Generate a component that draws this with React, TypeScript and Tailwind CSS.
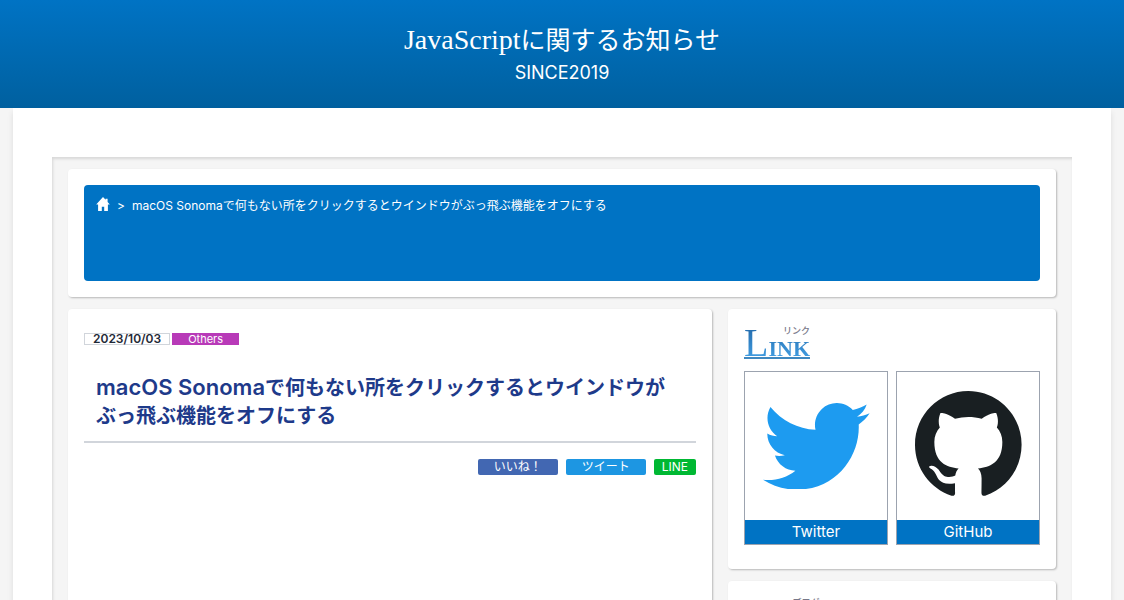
import type { ReactNode } from "react";

const PRODUCT = "macOS Sonoma";
const TOPIC = "で何もない所をクリックするとウインドウがぶっ飛ぶ機能をオフにする";

function Card({ children, className = "" }: { children: ReactNode; className?: string }) {
  return (
    <div className={`rounded-sm bg-white p-4 shadow-[1px_1px_2px_rgba(0,0,0,0.25)] ${className}`}>{children}</div>
  );
}

function HomeIcon() {
  return (
    <svg viewBox="0 0 14 14" className="h-[14px] w-[14px]" fill="currentColor" aria-hidden="true">
      <path d="M7 0 0.2 7.4h1.900V14h3.700V9.800h2.400V14h3.700V7.400h1.900L11.600 5V1.800H9.600v1z" />
    </svg>
  );
}

function TwitterLogo() {
  return (
    <svg viewBox="1 1.5 247 200" className="w-[107px]" fill="#1d9bf0" aria-hidden="true">
      <path d="M221.950 51.290c.15 2.170.15 4.340.15 6.530 0 66.730-50.800 143.690-143.690 143.690v-.04c-27.440.04-54.310-7.820-77.410-22.640 3.990.48 8 .72 12.020.73 22.740.02 44.830-7.610 62.720-21.660-21.610-.41-40.560-14.500-47.180-35.070 7.570 1.460 15.370 1.160 22.800-.87-23.560-4.760-40.510-25.460-40.510-49.500v-.64c7.020 3.910 14.880 6.080 22.920 6.320C11.580 63.310 4.740 33.790 18.140 10.710c25.640 31.550 63.470 50.730 104.080 52.760-4.070-17.540 1.490-35.920 14.610-48.250 20.340-19.120 52.330-18.140 71.450 2.190 11.310-2.230 22.150-6.380 32.070-12.260-3.770 11.690-11.660 21.620-22.200 27.930 10.010-1.180 19.790-3.860 29-7.950-6.780 10.160-15.320 19.010-25.200 26.160z" />
    </svg>
  );
}

function GitHubLogo() {
  return (
    <svg viewBox="0 0 98 98" className="mb-1 w-[107px]" fill="#191f22" aria-hidden="true">
      <path
        fillRule="evenodd"
        d="M48.854 0C21.839 0 0 22 0 49.217c0 21.756 13.993 40.172 33.405 46.690 2.427.49 3.316-1.059 3.316-2.362 0-1.141-.08-5.052-.08-9.127-13.590 2.934-16.420-5.867-16.420-5.867-2.184-5.704-5.420-7.170-5.420-7.170-4.448-3.015.324-3.015.324-3.015 4.934.326 7.523 5.052 7.523 5.052 4.367 7.496 11.404 5.378 14.235 4.074.404-3.178 1.699-5.378 3.074-6.600-10.839-1.141-22.243-5.378-22.243-24.283 0-5.378 1.940-9.778 5.014-13.200-.485-1.222-2.184-6.275.486-13.038 0 0 4.125-1.304 13.426 5.052a46.970 46.970 0 0 1 12.214-1.630c4.125 0 8.330.571 12.213 1.630 9.302-6.356 13.427-5.052 13.427-5.052 2.670 6.763.97 11.816.485 13.038 3.155 3.422 5.015 7.822 5.015 13.200 0 18.905-11.404 23.060-22.324 24.283 1.780 1.548 3.316 4.481 3.316 9.126 0 6.600-.08 11.897-.08 13.526 0 1.304.89 2.853 3.316 2.364 19.412-6.520 33.405-24.935 33.405-46.691C97.707 22 75.788 0 48.854 0z"
      />
    </svg>
  );
}

function LinkTile({ label, href, children }: { label: string; href: string; children: ReactNode }) {
  return (
    <a href={href} className="flex flex-col border border-[#9ca3af]">
      <span className="flex h-[148px] items-center justify-center">{children}</span>
      <span className="bg-[#0073c4] text-center text-[15px] leading-6 text-white">{label}</span>
    </a>
  );
}

function SectionHeading({ title, ruby }: { title: string; ruby: string }) {
  return (
    <h2 className="relative flex h-[34px] w-fit items-baseline border-b-2 border-[#3f88c0] bg-linear-to-b from-[#2368a8] to-[#3f9be0] bg-clip-text font-['Liberation_Serif',serif] text-transparent">
      <span className="text-[40px] leading-9">{title[0]}</span>
      <span className="text-[22px] leading-5 font-bold">{title.slice(1)}</span>
      <span className="absolute top-0 right-0 font-['Noto_Sans_CJK_JP',sans-serif] text-[9px] leading-3 font-medium text-[#777788]">
        {ruby}
      </span>
    </h2>
  );
}

export default function App() {
  return (
    <div className="h-screen overflow-hidden bg-[#f5f5f5] font-[Inter,'Noto_Sans_CJK_JP',sans-serif]">
      <header className="flex h-[108px] flex-col items-center bg-linear-to-b from-[#0073c4] to-[#00609f] pt-5 text-white">
        <h1 className="font-['Liberation_Serif','Noto_Sans_CJK_JP',serif] text-[25px] leading-10">
          <span className="text-[28px]">JavaScript</span>に関するお知らせ
        </h1>
        <p className="text-[18px] leading-6">SINCE2019</p>
      </header>

      <div className="mx-[13px] min-h-screen bg-white px-[39px] pt-[49px] shadow-[0_4px_6px_rgba(0,0,0,0.1)]">
        <div className="flex min-h-screen flex-col gap-3 bg-[#f5f5f5] px-4 pt-3 shadow-[inset_1px_2px_3px_rgba(0,0,0,0.12)]">
          <Card>
            <nav
              aria-label="パンくず"
              className="flex h-24 items-start gap-[7px] rounded-sm bg-[#0073c4] px-3 pt-3 text-[12px] leading-[18px] text-white"
            >
              <a href="#home" aria-label="ホーム">
                <HomeIcon />
              </a>
              <span>&gt;</span>
              <span>
                {PRODUCT}
                {TOPIC}
              </span>
            </nav>
          </Card>

          <div className="flex flex-1 gap-4">
            <Card className="flex-1">
              <main>
                <div className="flex gap-0.5 pt-2 text-[12px] leading-[10px]">
                  <time dateTime="2023-10-03" className="border border-[#d1d5db] px-2 font-semibold text-[#1f2937]">
                    2023/10/03
                  </time>
                  <a href="#others" className="flex items-center bg-[#b83ab8] px-4 text-[11px] text-white">
                    Others
                  </a>
                </div>
                <h2 className="mt-5 border-b-2 border-[#d1d5db] px-3 pt-2 pb-[11px] text-[20px] leading-7 font-semibold text-[#1e3a8a]">
                  <span className="text-[22px]">{PRODUCT}</span>
                  {TOPIC}
                </h2>
                <div className="mt-4 flex justify-end gap-2 text-[12px] leading-4 text-white">
                  <button className="rounded-xs bg-[#4267b2] px-4">いいね！</button>
                  <button className="rounded-xs bg-[#1d96e2] px-4">ツイート</button>
                  <button className="rounded-xs bg-[#00b833] px-2">LINE</button>
                </div>
              </main>
            </Card>

            <aside className="flex w-[328px] flex-col gap-3">
              <Card>
                <SectionHeading title="LINK" ruby="リンク" />
                <div className="mt-3 mb-2 grid grid-cols-2 gap-2">
                  <LinkTile label="Twitter" href="#twitter">
                    <TwitterLogo />
                  </LinkTile>
                  <LinkTile label="GitHub" href="#github">
                    <GitHubLogo />
                  </LinkTile>
                </div>
              </Card>
              <Card>
                <SectionHeading title="BLOG" ruby="ブログ" />
              </Card>
            </aside>
          </div>
        </div>
      </div>
    </div>
  );
}
